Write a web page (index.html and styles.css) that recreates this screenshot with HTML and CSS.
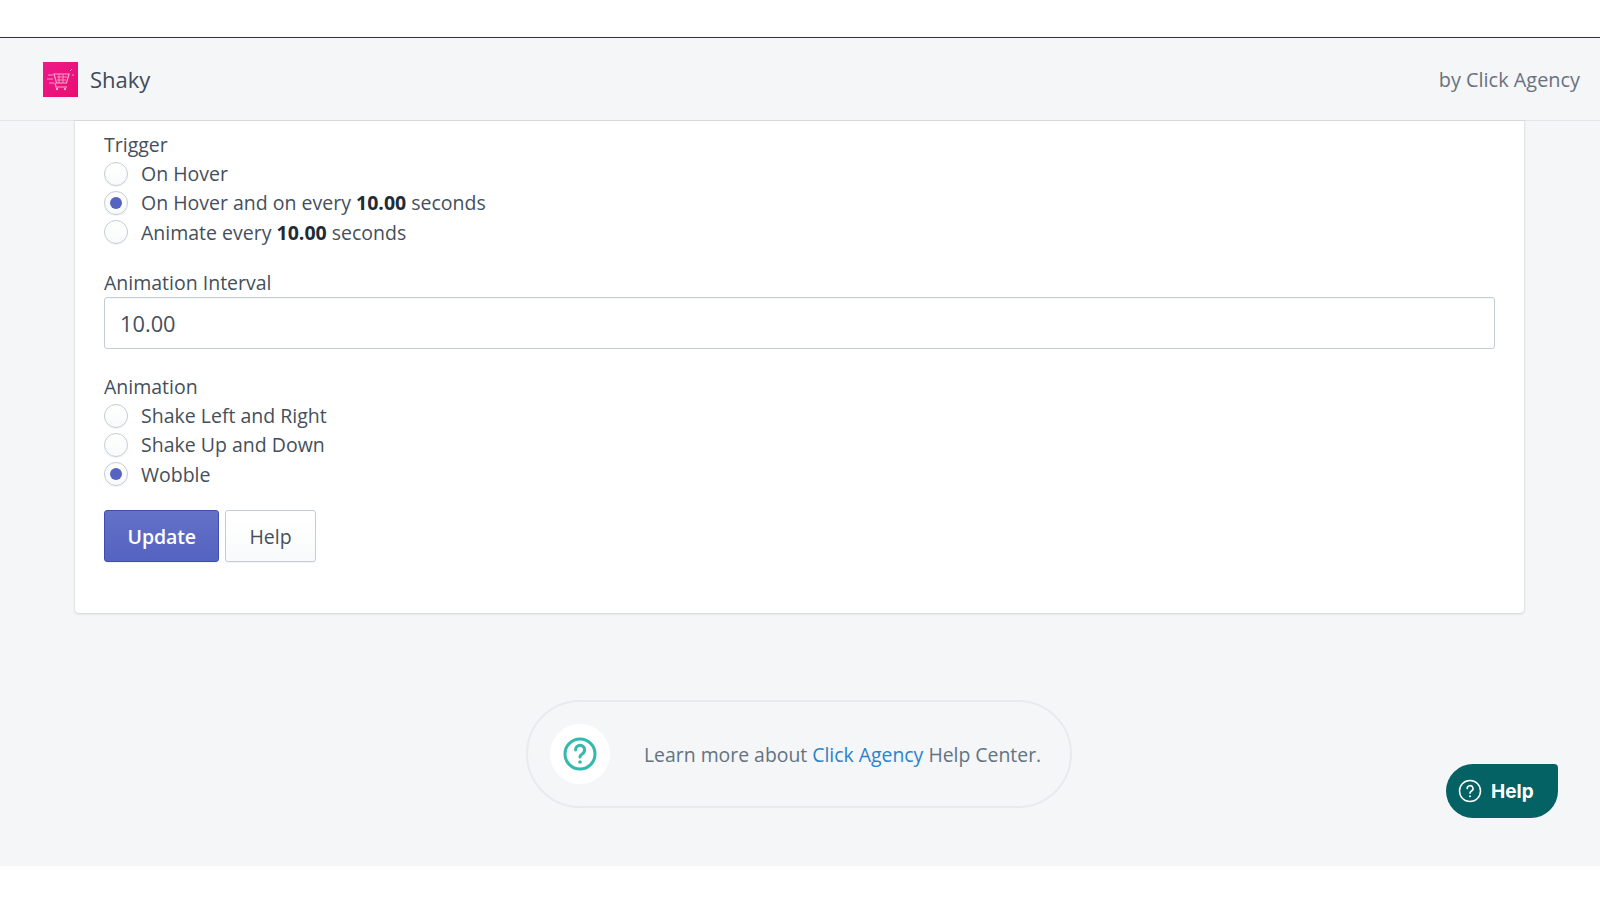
FILE: index.html
```html
<!DOCTYPE html>
<html lang="en">
<head>
  <meta charset="UTF-8" />
  <meta name="viewport" content="width=device-width, initial-scale=1.0" />
  <title>Shaky</title>
  <link rel="stylesheet" href="styles.css">
</head>
<body>
  <div class="topbar"></div>
  <div class="app">
    <header class="header">
      <div class="brand">
        <svg class="logo" viewBox="0 0 35 35" aria-hidden="true">
          <defs>
            <linearGradient id="logoBg" x1="0" y1="0" x2="1" y2="1">
              <stop offset="0" stop-color="#ee1a8c" />
              <stop offset="1" stop-color="#e80d70" />
            </linearGradient>
          </defs>
          <rect width="35" height="35" fill="url(#logoBg)" />
          <g fill="none" stroke="#f7a8cf" stroke-width="1.2">
            <path d="M11 12h15l-2.5 9h-10z" />
            <path d="M14 15h10M14 18h9M16 12v9M20 12v9" stroke-width=".8" />
            <path d="M24 25h-11l-1-4" />
            <path d="M5 13h5M4 17h6M6 21h5M27 9l2-2M29 13h2" stroke-width=".9" />
          </g>
          <circle cx="14" cy="27" r="1.2" fill="#f7a8cf" />
          <circle cx="22" cy="27" r="1.2" fill="#f7a8cf" />
        </svg>
        <span class="brand-name">Shaky</span>
      </div>
      <div class="by">by Click Agency</div>
    </header>

    <main class="main">
      <section class="card">
        <div class="group">
          <div class="label">Trigger</div>
          <div class="radio"><span class="dot"></span>On Hover</div>
          <div class="radio"><span class="dot on"></span><span>On Hover and on every <b>10.00</b> seconds</span></div>
          <div class="radio"><span class="dot"></span><span>Animate every <b>10.00</b> seconds</span></div>
        </div>
        <div class="group field">
          <label class="label" for="interval">Animation Interval</label>
          <input class="input" id="interval" type="text" value="10.00">
        </div>
        <div class="group">
          <div class="label">Animation</div>
          <div class="radio"><span class="dot"></span>Shake Left and Right</div>
          <div class="radio"><span class="dot"></span>Shake Up and Down</div>
          <div class="radio"><span class="dot on"></span>Wobble</div>
        </div>
        <div class="actions">
          <button class="btn primary">Update</button>
          <button class="btn">Help</button>
        </div>
      </section>

      <div class="learn">
        <span class="learn-icon">
          <svg viewBox="0 0 36 36" width="36" height="36" aria-hidden="true">
            <circle cx="18" cy="18" r="15" fill="none" stroke="#35b8ad" stroke-width="3" />
            <path d="M13.6 14a4.5 4.5 0 1 1 6.9 3.7c-1.6 1-2.5 1.7-2.5 3.3" fill="none" stroke="#35b8ad" stroke-width="3" stroke-linecap="round" />
            <circle cx="18" cy="26" r="1.8" fill="#35b8ad" />
          </svg>
        </span>
        <span class="learn-text">Learn more about <a href="#">Click Agency</a> Help Center.</span>
      </div>
    </main>
  </div>

  <div class="help-widget">
    <svg viewBox="0 0 24 24" width="24" height="24" aria-hidden="true">
      <circle cx="12" cy="12" r="10.5" fill="none" stroke="#fff" stroke-width="1.5" />
      <path d="M9.2 9.6a2.9 2.9 0 1 1 4.4 2.4c-1 .6-1.6 1.1-1.6 2.3" fill="none" stroke="#fff" stroke-width="1.6" stroke-linecap="round" />
      <circle cx="12" cy="17.2" r="1" fill="#fff" />
    </svg>
    Help
  </div>
</body>
</html>
```

FILE: styles.css
```css
html, body {
  height: 100%;
}

body {
  margin: 0;
  background-color: #ffffff;
  color: #454f5b;
  font-family: "Open Sans", "Noto Sans", sans-serif;
  font-size: 19.5px;
  overflow: hidden;
}

.topbar {
  height: 37px;
  border-bottom: 1px solid #2f3146;
}

.app {
  height: 828px;
  background-color: #f4f6f8;
}

.header {
  display: flex;
  justify-content: space-between;
  align-items: center;
  height: 82px;
  padding: 0 20px 0 43px;
  border-bottom: 1px solid #e3e5e8;
}

.brand {
  display: flex;
  align-items: center;
  gap: 12px;
}

.logo {
  width: 35px;
  height: 35px;
}

.brand-name {
  font-size: 22px;
  color: #3f4a5a;
}

.by {
  font-size: 19.9px;
  color: #69727e;
}

.main {
  padding: 0 76px 0 75px;
}

.card {
  height: 492px;
  box-sizing: border-box;
  padding: 9px 29px 0;
  background-color: #ffffff;
  border-radius: 0 0 4px 4px;
  box-shadow: 0 0 0 1px rgba(63, 63, 68, 0.05), 0 1px 3px rgba(63, 63, 68, 0.15);
}

.group {
  margin-bottom: 21px;
}

.field {
  margin-bottom: 23px;
}

.label {
  display: block;
  height: 29px;
  line-height: 29px;
}

.radio {
  display: flex;
  align-items: center;
  gap: 13px;
  height: 29.3px;
}

.dot {
  flex: none;
  width: 22px;
  height: 22px;
  border: 1px solid #c4cdd5;
  border-radius: 50%;
  background: linear-gradient(#ffffff, #f9fafb);
  box-shadow: 0 1px 1px rgba(22, 29, 37, 0.05);
  display: flex;
  align-items: center;
  justify-content: center;
}

.dot.on::after {
  content: "";
  width: 12px;
  height: 12px;
  border-radius: 50%;
  background-color: #5563c1;
}

.radio b {
  font-weight: 700;
  color: #212b36;
}

.input {
  display: block;
  box-sizing: border-box;
  width: 100%;
  height: 52px;
  padding: 2px 15px 0;
  border: 1px solid #c4cdd5;
  border-radius: 3px;
  box-shadow: inset 0 1px 0 rgba(99, 115, 129, 0.05);
  font: inherit;
  font-size: 21.8px;
  color: #454f5b;
}

.actions {
  display: flex;
  gap: 6px;
  margin-top: 21px;
}

.btn {
  height: 52px;
  padding: 2px 23px 0;
  border: 1px solid #c4cdd5;
  border-radius: 3px;
  background: linear-gradient(#ffffff, #f9fafb);
  box-shadow: 0 1px 0 rgba(22, 29, 37, 0.05);
  font: inherit;
  color: #454f5b;
}

.primary {
  padding: 2px 22.5px 0;
  border-color: #3f4eae;
  background: linear-gradient(#6371c7, #5563c1);
  color: #ffffff;
  font-weight: 600;
  letter-spacing: -0.1px;
}

.learn {
  display: flex;
  align-items: center;
  width: 546px;
  height: 108px;
  box-sizing: border-box;
  margin: 87px 0 0 451px;
  padding-left: 22px;
  border: 2px solid #e8eaed;
  border-radius: 54px;
}

.learn-icon {
  display: flex;
  align-items: center;
  justify-content: center;
  width: 60px;
  height: 60px;
  margin-right: 34px;
  border-radius: 50%;
  background-color: #ffffff;
}

.learn-text {
  font-size: 19.4px;
  color: #637381;
}

.learn-text a {
  color: #2d82c9;
  text-decoration: none;
}

.help-widget {
  position: absolute;
  left: 1446px;
  top: 764px;
  display: flex;
  align-items: center;
  gap: 9px;
  width: 112px;
  height: 54px;
  box-sizing: border-box;
  padding-left: 12px;
  background-color: #046164;
  border-radius: 27px 4px 27px 27px;
  color: #ffffff;
  font-family: "Inter", "Liberation Sans", sans-serif;
  font-size: 19px;
  font-weight: 700;
}
```
